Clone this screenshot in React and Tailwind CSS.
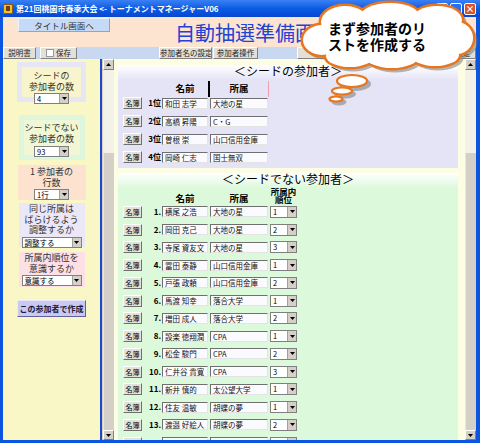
import React from 'react';

const seeds = [
  ['1位', '和田 志学', '大地の星'],
  ['2位', '高橋 昇陽', 'C・G'],
  ['3位', '曽根 崇', '山口信用金庫'],
  ['4位', '岡崎 仁志', '国士無双'],
];

const players = [
  ['1.', '横尾 之浩', '大地の星', '1'],
  ['2.', '岡田 克己', '大地の星', '2'],
  ['3.', '寺尾 資友文', '大地の星', '3'],
  ['4.', '冨田 泰静', '山口信用金庫', '1'],
  ['5.', '戸張 政頼', '山口信用金庫', '2'],
  ['6.', '馬渡 知幸', '落合大学', '1'],
  ['7.', '増田 成人', '落合大学', '2'],
  ['8.', '設楽 徳翔潤', 'CPA', '1'],
  ['9.', '松金 駿門', 'CPA', '2'],
  ['10.', '仁井谷 貴寛', 'CPA', '3'],
  ['11.', '新井 慎的', '太公望大学', '1'],
  ['12.', '住友 温敏', '胡蝶の夢', '1'],
  ['13.', '渡邉 好絵人', '胡蝶の夢', '2'],
  ['', '', '', ''],
];

// cloud lobes for the callout
const lobes = [
  [322, 40, 19, 15],
  [345, 22, 24, 16],
  [390, 17, 30, 14],
  [437, 20, 25, 14],
  [457, 38, 16, 16],
  [435, 55, 24, 11],
  [392, 57, 26, 11],
  [350, 56, 24, 11],
  [390, 38, 62, 22],
];

const bubbles = [
  [352, 81, 15, 6],
  [342, 91, 10, 3.5],
  [336, 99, 6.5, 2.5],
];

function Arrow() {
  return (
    <span className="w-[9px] bg-[#d4d0c8] border-l border-[#a0a0a0] flex items-center justify-center">
      <svg width="5" height="3" viewBox="0 0 5 3">
        <path d="M0 0h5L2.5 3z" fill="#000" />
      </svg>
    </span>
  );
}

function Select({ value, className }) {
  return (
    <div className={`flex bg-white border border-[#7f7f7f] ${className}`}>
      <span className="flex-1 pl-[2px] text-[7.5px] leading-[9px] text-black whitespace-nowrap overflow-hidden">{value}</span>
      <Arrow />
    </div>
  );
}

function Field({ text, className }) {
  return (
    <div className={`h-[11px] bg-[#fbfbff] border-t border-l border-[#6f6f6f] border-b-[#e4e4e4] border-r-[#e4e4e4] border-b border-r pl-[2px] text-[7.5px] leading-[9px] text-[#111] whitespace-nowrap overflow-hidden ${className}`}>
      {text}
    </div>
  );
}

function MeiboButton({ label = '名簿' }) {
  return (
    <div className="w-[19px] h-[12px] bg-[#e4e1d8] border border-t-white border-l-white border-b-[#707070] border-r-[#707070] text-[7px] leading-[10px] text-center text-black">
      {label}
    </div>
  );
}

function ToolButton({ children, className }) {
  return (
    <div className={`h-full bg-[#e3e0d8] border border-t-white border-l-white border-b-[#808080] border-r-[#808080] text-[7.5px] leading-[10px] text-center text-[#222] whitespace-nowrap overflow-hidden ${className}`}>
      {children}
    </div>
  );
}

function Scrollbar() {
  return (
    <div className="w-[11px] flex flex-col bg-[#d4d0c8]">
      <div className="h-[11px] bg-[#d4d0c8] border border-t-white border-l-white border-b-[#808080] border-r-[#808080] flex items-center justify-center">
        <svg width="5" height="3" viewBox="0 0 5 3">
          <path d="M0 3h5L2.5 0z" fill="#000" />
        </svg>
      </div>
      <div className="h-[83px] bg-[#f3f1e8]" />
      <div className="flex-1 bg-[#d4d0c8] border-l border-[#e8e6de]" />
      <div className="h-[10px] bg-[#d4d0c8] border border-t-white border-l-white border-b-[#808080] border-r-[#808080] flex items-center justify-center">
        <svg width="5" height="3" viewBox="0 0 5 3">
          <path d="M0 0h5L2.5 3z" fill="#000" />
        </svg>
      </div>
    </div>
  );
}

function SideBox({ lines, className, children }) {
  return (
    <div className={`flex flex-col items-center ${className}`}>
      {lines.map((l) => (
        <div key={l} className="text-[9px] leading-[10.5px] text-[#333] whitespace-nowrap">{l}</div>
      ))}
      {children}
    </div>
  );
}

export default function App() {
  return (
    <div className="relative w-[480px] h-[443px] bg-[#0b55e0] flex flex-col overflow-hidden font-['Noto_Sans_CJK_JP',sans-serif]">
      {/* title bar */}
      <div className="h-[17px] bg-linear-to-b from-[#3a80f4] via-[#0a5be4] to-[#0846cf] flex items-center pl-[3px] pr-[4px]">
        <div className="w-[10px] h-[10px] bg-[#f2c12e] border border-[#8a5a10] flex items-center justify-center">
          <div className="w-[4px] h-[5px] bg-[#7a3a10]" />
        </div>
        <div className="ml-[3px] text-[8px] leading-[10px] font-bold text-white whitespace-nowrap">
          第21回桃園市春季大会 &lt;- トーナメントマネージャーV06
        </div>
        <div className="ml-auto flex gap-[2px]">
          <div className="w-[12px] h-[12px] rounded-[2px] border border-white bg-[#2b6cf0]" />
          <div className="w-[12px] h-[12px] rounded-[2px] border border-white bg-[#2b6cf0]" />
          <div className="w-[12px] h-[12px] rounded-[2px] border border-white bg-[#d9542c] text-white text-[9px] leading-[10px] text-center font-bold">×</div>
        </div>
      </div>

      {/* window content */}
      <div className="flex-1 flex flex-col pl-[3px] pr-[4px] pb-[3px] min-h-0">
        {/* header */}
        <div className="h-[30px] bg-[#fde4d0] flex items-start">
          <div className="ml-[15px] mt-[1px] w-[92px] h-[14px] bg-[#c5daf6] border border-[#e8f0fc] border-b-[#8ea4c8] border-r-[#8ea4c8] text-[8.5px] leading-[12px] text-center text-[#333]">
            タイトル画面へ
          </div>
          <div className="ml-[65px] mt-[5px] text-[20px] leading-[22px] text-[#2242d2] whitespace-nowrap">
            自動抽選準備画面
          </div>
        </div>

        {/* toolbar */}
        <div className="h-[12px] bg-[#c8d8f1] flex">
          <ToolButton className="w-[33px]">説明書</ToolButton>
          <ToolButton className="ml-[4px] w-[37px] flex items-center justify-center gap-[2px]">
            <span className="w-[8px] h-[8px] bg-white border border-[#999]" />
            <span>保存</span>
          </ToolButton>
          <ToolButton className="ml-[82px] w-[53px]">参加者名の設定</ToolButton>
          <ToolButton className="ml-[1px] w-[45px]">参加者操作</ToolButton>
          <ToolButton className="ml-[39px] w-[60px]">参加者</ToolButton>
          <ToolButton className="ml-auto w-[26px]">設定</ToolButton>
        </div>

        {/* body */}
        <div className="flex-1 flex min-h-0">
          {/* left panel */}
          <div className="w-[97px] bg-[#faf7c7] flex flex-col items-center pt-[3px]">
            <SideBox lines={['シードの', '参加者の数']} className="w-[69px] h-[40px] border-[5px] border-[#e6e6f6] bg-[#f8f5cc] pt-[4px]">
              <Select value="4" className="mt-[1px] w-[35px] h-[11px]" />
            </SideBox>
            <SideBox lines={['シードでない', '参加者の数']} className="mt-[13px] w-[66px] h-[45px] border-[5px] border-[#ddf6dc] bg-[#f1f7d4] pt-[3px]">
              <Select value="93" className="mt-[2px] w-[35px] h-[11px]" />
            </SideBox>
            <SideBox lines={['1 参加者の', '行数']} className="mt-[5px] w-[68px] h-[35px] bg-[#fde2cf] pt-[2px]">
              <Select value="1行" className="mt-[1px] w-[35px] h-[11px]" />
            </SideBox>
            <SideBox lines={['同じ所属は', 'ばらけるよう', '調整するか']} className="mt-[3px] w-[66px] h-[44px] bg-[#ebe7f7] pt-[1px]">
              <Select value="調整する" className="mt-[1px] w-[60px] h-[11px]" />
            </SideBox>
            <SideBox lines={['所属内順位を', '意識するか']} className="mt-[5px] w-[66px] h-[35px] bg-[#fde0e6] pt-[1px]">
              <Select value="意識する" className="mt-[1px] w-[60px] h-[11px]" />
            </SideBox>
            <div className="mt-[13px] w-[69px] h-[17px] bg-[#c9c9f1] border border-t-[#e8e8ff] border-l-[#e8e8ff] border-b-[#6060a0] border-r-[#6060a0] text-[8px] leading-[15px] font-bold text-center text-[#1a1a40] whitespace-nowrap">
              この参加者で作成
            </div>
          </div>
          <div className="w-[2px] bg-[#1f48d0]" />
          <div className="w-[1px] bg-[#d4d0c8]" />
          <Scrollbar />

          {/* main */}
          <div className="flex-1 bg-[#fdfde4] pt-[6px] pl-[4px] overflow-hidden">
            {/* seed panel */}
            <div className="w-[340px] h-[103px] bg-[#e4e4f6] flex flex-col">
              <div className="h-[15px] bg-linear-to-b from-white to-[#e4e4f6] text-[12px] leading-[15px] text-center text-black font-['Liberation_Serif','Noto_Sans_CJK_JP',serif]">
                ＜シードの参加者＞
              </div>
              <div className="h-[14px] flex items-end pl-[44px]">
                <div className="w-[46px] text-center text-[9.5px] leading-[11px] font-bold">名前</div>
                <div className="w-[2px] h-[16px] bg-black self-end mb-[-3px]" />
                <div className="w-[58px] text-center text-[9.5px] leading-[11px] font-bold">所属</div>
                <div className="w-[1px] h-[16px] bg-[#f0a0a8] mb-[-3px]" />
              </div>
              {seeds.map(([label, name, team]) => (
                <div key={label} className="h-[18px] flex items-center pl-[5px]">
                  <MeiboButton />
                  <div className="w-[20px] text-right pr-[1px] text-[8px] leading-[10px] font-bold">{label}</div>
                  <Field text={name} className="w-[46px]" />
                  <Field text={team} className="ml-[2px] w-[58px]" />
                </div>
              ))}
            </div>

            {/* non-seed panel */}
            <div className="mt-[5px] w-[340px] h-[280px] bg-[#dcf9dc] flex flex-col">
              <div className="h-[15px] bg-linear-to-b from-white to-[#dcf9dc] text-[12px] leading-[15px] text-center text-black font-['Liberation_Serif','Noto_Sans_CJK_JP',serif]">
                ＜シードでない参加者＞
              </div>
              <div className="h-[15px] flex items-end pl-[44px] font-bold">
                <div className="w-[46px] text-center text-[9.5px] leading-[10px]">名前</div>
                <div className="ml-[2px] w-[58px] text-center text-[9.5px] leading-[10px]">所属</div>
                <div className="ml-[2px] w-[27px] text-center text-[8.5px] leading-[7.5px]">
                  所属内<br />順位
                </div>
              </div>
              {players.map(([label, name, team, rank], i) => (
                <div key={i} className="h-[17.75px] flex items-center pl-[5px]">
                  <MeiboButton label={label ? '名簿' : ''} />
                  <div className="w-[20px] text-right pr-[1px] text-[8px] leading-[10px] font-bold">{label}</div>
                  <Field text={name} className="w-[46px]" />
                  <Field text={team} className="ml-[2px] w-[58px]" />
                  <Select value={rank} className="ml-[2px] w-[27px] h-[12px]" />
                </div>
              ))}
            </div>
          </div>
          <Scrollbar />
        </div>
      </div>

      {/* callout */}
      <svg className="absolute left-0 top-0 pointer-events-none" width="480" height="443" viewBox="0 0 480 443">
        <g transform="translate(3 3)" fill="#7a7a7a" opacity="0.55">
          {lobes.map(([cx, cy, rx, ry], i) => (
            <ellipse key={i} cx={cx} cy={cy} rx={rx + 1.5} ry={ry + 1.5} />
          ))}
          {bubbles.map(([cx, cy, rx, ry], i) => (
            <ellipse key={i} cx={cx} cy={cy} rx={rx + 1} ry={ry + 1} />
          ))}
        </g>
        <g fill="#e8761e" stroke="#e8761e" strokeWidth="5">
          {lobes.map(([cx, cy, rx, ry], i) => (
            <ellipse key={i} cx={cx} cy={cy} rx={rx} ry={ry} />
          ))}
        </g>
        <g fill="#ffffff">
          {lobes.map(([cx, cy, rx, ry], i) => (
            <ellipse key={i} cx={cx} cy={cy} rx={rx} ry={ry} />
          ))}
        </g>
        <g fill="#ffffff" stroke="#e8761e" strokeWidth="2.2">
          {bubbles.map(([cx, cy, rx, ry], i) => (
            <ellipse key={i} cx={cx} cy={cy} rx={rx} ry={ry} />
          ))}
        </g>
      </svg>
      <div className="absolute left-[328px] top-[20px] text-[14px] leading-[16px] font-bold text-black whitespace-nowrap pointer-events-none">
        <div>まず参加者のリ</div>
        <div>ストを作成する</div>
      </div>
    </div>
  );
}
